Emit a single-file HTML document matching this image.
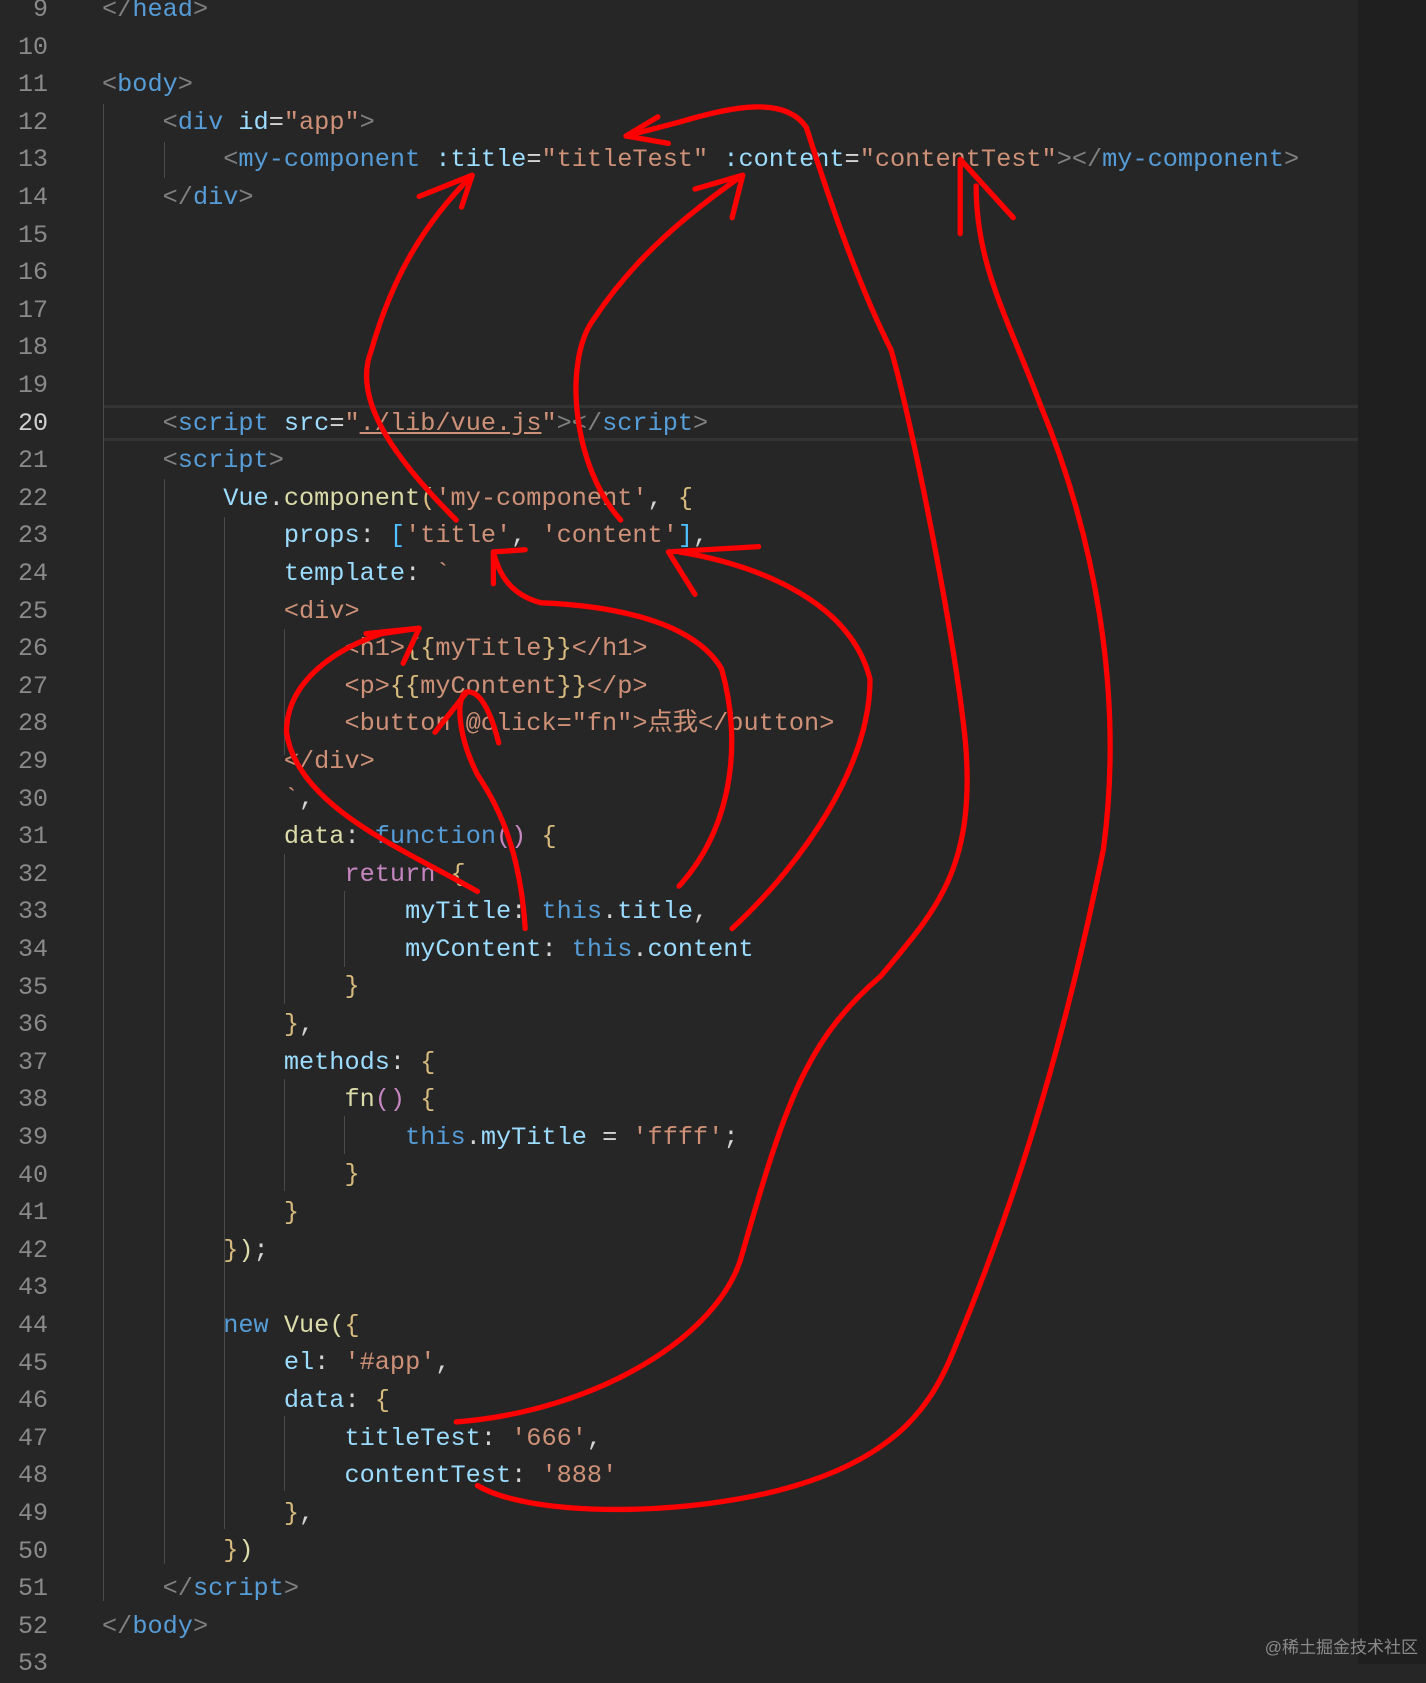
<!DOCTYPE html>
<html><head><meta charset="utf-8"><style>
html,body{margin:0;padding:0;width:1426px;height:1664px;overflow:hidden;background:#262626;}
#side{position:absolute;left:1358px;top:0;width:68px;height:1664px;background:#1f1f1f;}
#hl{position:absolute;left:104px;top:405px;width:1254px;height:30px;border-top:3px solid #333;border-bottom:3px solid #333;}
.ln{position:absolute;left:0;width:48px;text-align:right;font:25px/37.6px "Liberation Mono",monospace;color:#8a8a8a;}
pre{position:absolute;left:102px;margin:0;font:25.25px/37.6px "Liberation Mono","Noto Sans CJK SC",monospace;color:#d4d4d4;}
.g{color:#808080}.t{color:#569cd6}.a{color:#9cdcfe}.s{color:#ce9178}.y{color:#dcdcaa}.b{color:#d7ba7d}.p{color:#c586c0}.c{color:#4fc1ff}
.guide{position:absolute;width:1px;background:#4a4a4a;}
#wm{position:absolute;right:8px;top:1633px;font:17px "Liberation Sans","Noto Sans CJK SC",sans-serif;color:#8a8a8a;}
</style></head><body>
<div id="side"></div>
<div id="hl"></div>
<div class="guide" style="left:103px;top:104px;height:1497px"></div>
<div class="guide" style="left:164px;top:142px;height:36px"></div>
<div class="guide" style="left:164px;top:479px;height:1085px"></div>
<div class="guide" style="left:224px;top:517px;height:1010px"></div>
<div class="guide" style="left:284px;top:629px;height:126px"></div>
<div class="guide" style="left:284px;top:854px;height:150px"></div>
<div class="guide" style="left:344px;top:891px;height:76px"></div>
<div class="guide" style="left:284px;top:1079px;height:112px"></div>
<div class="guide" style="left:344px;top:1116px;height:38px"></div>
<div class="guide" style="left:224px;top:1341px;height:188px"></div>
<div class="guide" style="left:284px;top:1416px;height:75px"></div>
<div style="position:absolute;top:-9px;left:0;width:60px">
<div class="ln" style="top:0px">9</div><div class="ln" style="top:37.6px">10</div><div class="ln" style="top:75.2px">11</div><div class="ln" style="top:112.8px">12</div><div class="ln" style="top:150.4px">13</div><div class="ln" style="top:188px">14</div><div class="ln" style="top:225.6px">15</div><div class="ln" style="top:263.2px">16</div><div class="ln" style="top:300.8px">17</div><div class="ln" style="top:338.4px">18</div><div class="ln" style="top:376px">19</div><div class="ln" style="top:413.6px;color:#d0d0d0">20</div><div class="ln" style="top:451.2px">21</div><div class="ln" style="top:488.8px">22</div><div class="ln" style="top:526.4px">23</div><div class="ln" style="top:564px">24</div><div class="ln" style="top:601.6px">25</div><div class="ln" style="top:639.2px">26</div><div class="ln" style="top:676.8px">27</div><div class="ln" style="top:714.4px">28</div><div class="ln" style="top:752px">29</div><div class="ln" style="top:789.6px">30</div><div class="ln" style="top:827.2px">31</div><div class="ln" style="top:864.8px">32</div><div class="ln" style="top:902.4px">33</div><div class="ln" style="top:940px">34</div><div class="ln" style="top:977.6px">35</div><div class="ln" style="top:1015.2px">36</div><div class="ln" style="top:1052.8px">37</div><div class="ln" style="top:1090.4px">38</div><div class="ln" style="top:1128px">39</div><div class="ln" style="top:1165.6px">40</div><div class="ln" style="top:1203.2px">41</div><div class="ln" style="top:1240.8px">42</div><div class="ln" style="top:1278.4px">43</div><div class="ln" style="top:1316px">44</div><div class="ln" style="top:1353.6px">45</div><div class="ln" style="top:1391.2px">46</div><div class="ln" style="top:1428.8px">47</div><div class="ln" style="top:1466.4px">48</div><div class="ln" style="top:1504px">49</div><div class="ln" style="top:1541.6px">50</div><div class="ln" style="top:1579.2px">51</div><div class="ln" style="top:1616.8px">52</div><div class="ln" style="top:1654.4px">53</div>
</div>
<pre style="top:-9px"><span class="g">&lt;/</span><span class="t">head</span><span class="g">&gt;</span>

<span class="g">&lt;</span><span class="t">body</span><span class="g">&gt;</span>
    <span class="g">&lt;</span><span class="t">div</span> <span class="a">id</span>=<span class="s">"app"</span><span class="g">&gt;</span>
        <span class="g">&lt;</span><span class="t">my-component</span> <span class="a">:title</span>=<span class="s">"titleTest"</span> <span class="a">:content</span>=<span class="s">"contentTest"</span><span class="g">&gt;&lt;/</span><span class="t">my-component</span><span class="g">&gt;</span>
    <span class="g">&lt;/</span><span class="t">div</span><span class="g">&gt;</span>





    <span class="g">&lt;</span><span class="t">script</span> <span class="a">src</span>=<span class="s">"<u>./lib/vue.js</u>"</span><span class="g">&gt;&lt;/</span><span class="t">script</span><span class="g">&gt;</span>
    <span class="g">&lt;</span><span class="t">script</span><span class="g">&gt;</span>
        <span class="a">Vue</span>.<span class="y">component</span><span class="b">(</span><span class="s">'my-component'</span>, <span class="b">{</span>
            <span class="a">props</span>: <span class="c">[</span><span class="s">'title'</span>, <span class="s">'content'</span><span class="c">]</span>,
            <span class="a">template</span>: <span class="s">`</span>
<span class="s">            &lt;div&gt;</span>
<span class="s">                &lt;h1&gt;</span><span class="b">{{</span><span class="s">myTitle</span><span class="b">}}</span><span class="s">&lt;/h1&gt;</span>
<span class="s">                &lt;p&gt;</span><span class="b">{{</span><span class="s">myContent</span><span class="b">}}</span><span class="s">&lt;/p&gt;</span>
<span class="s">                &lt;button @click="fn"&gt;点我&lt;/button&gt;</span>
<span class="s">            &lt;/div&gt;</span>
<span class="s">            `</span>,
            <span class="y">data</span>: <span class="t">function</span><span class="p">()</span> <span class="b">{</span>
                <span class="p">return</span> <span class="b">{</span>
                    <span class="a">myTitle</span>: <span class="t">this</span>.<span class="a">title</span>,
                    <span class="a">myContent</span>: <span class="t">this</span>.<span class="a">content</span>
                <span class="b">}</span>
            <span class="b">}</span>,
            <span class="a">methods</span>: <span class="b">{</span>
                <span class="y">fn</span><span class="p">()</span> <span class="b">{</span>
                    <span class="t">this</span>.<span class="a">myTitle</span> = <span class="s">'ffff'</span>;
                <span class="b">}</span>
            <span class="b">}</span>
        <span class="b">}</span><span class="y">)</span>;

        <span class="t">new</span> <span class="y">Vue</span><span class="y">(</span><span class="b">{</span>
            <span class="a">el</span>: <span class="s">'#app'</span>,
            <span class="a">data</span>: <span class="b">{</span>
                <span class="a">titleTest</span>: <span class="s">'666'</span>,
                <span class="a">contentTest</span>: <span class="s">'888'</span>
            <span class="b">}</span>,
        <span class="b">}</span><span class="y">)</span>
    <span class="g">&lt;/</span><span class="t">script</span><span class="g">&gt;</span>
<span class="g">&lt;/</span><span class="t">body</span><span class="g">&gt;</span>
</pre>
<svg style="position:absolute;left:0;top:0" width="1426" height="1664" viewBox="0 0 1344 1568" fill="none" stroke="#ff0000" stroke-width="5" stroke-linecap="round" stroke-linejoin="round">
<path d="M430,490 C380,440 330,380 350,330 C370,260 400,210 445,165"/><path d="M395,185 L445,165 L435,195"/>
<path d="M585,490 C540,440 530,340 560,300 C600,240 650,200 700,165"/><path d="M655,178 L700,165 L690,205"/>
<path d="M430,1340 C560,1330 680,1260 700,1180 C740,1040 760,980 830,920 C880,860 920,820 910,700 C900,600 860,400 840,330 C800,250 770,150 760,120 C740,90 690,100 640,115 L590,128"/><path d="M620,110 L590,128 L630,135"/>
<path d="M450,1400 C500,1430 650,1430 750,1400 C850,1370 880,1320 900,1270 C950,1150 1000,1000 1040,800 C1060,650 1030,500 980,380 C950,300 920,250 920,175"/><path d="M905,220 L905,150 L955,205"/>
<path d="M640,835 C690,780 700,700 680,630 C650,580 560,570 510,568 C480,560 470,540 465,520"/><path d="M465,550 L465,520 L495,518"/>
<path d="M690,875 C760,810 820,720 820,640 C800,560 700,530 640,520"/><path d="M655,560 L630,520 L715,515"/>
<path d="M495,875 C490,800 470,760 450,730 C430,690 430,655 440,652 C455,650 465,680 470,700"/><path d="M410,690 L440,652"/>
<path d="M450,840 C380,800 280,760 270,690 C270,640 320,610 360,597 L395,592"/><path d="M345,597 L395,592 L380,625"/>
</svg>
<div id="wm">@稀土掘金技术社区</div>
</body></html>
